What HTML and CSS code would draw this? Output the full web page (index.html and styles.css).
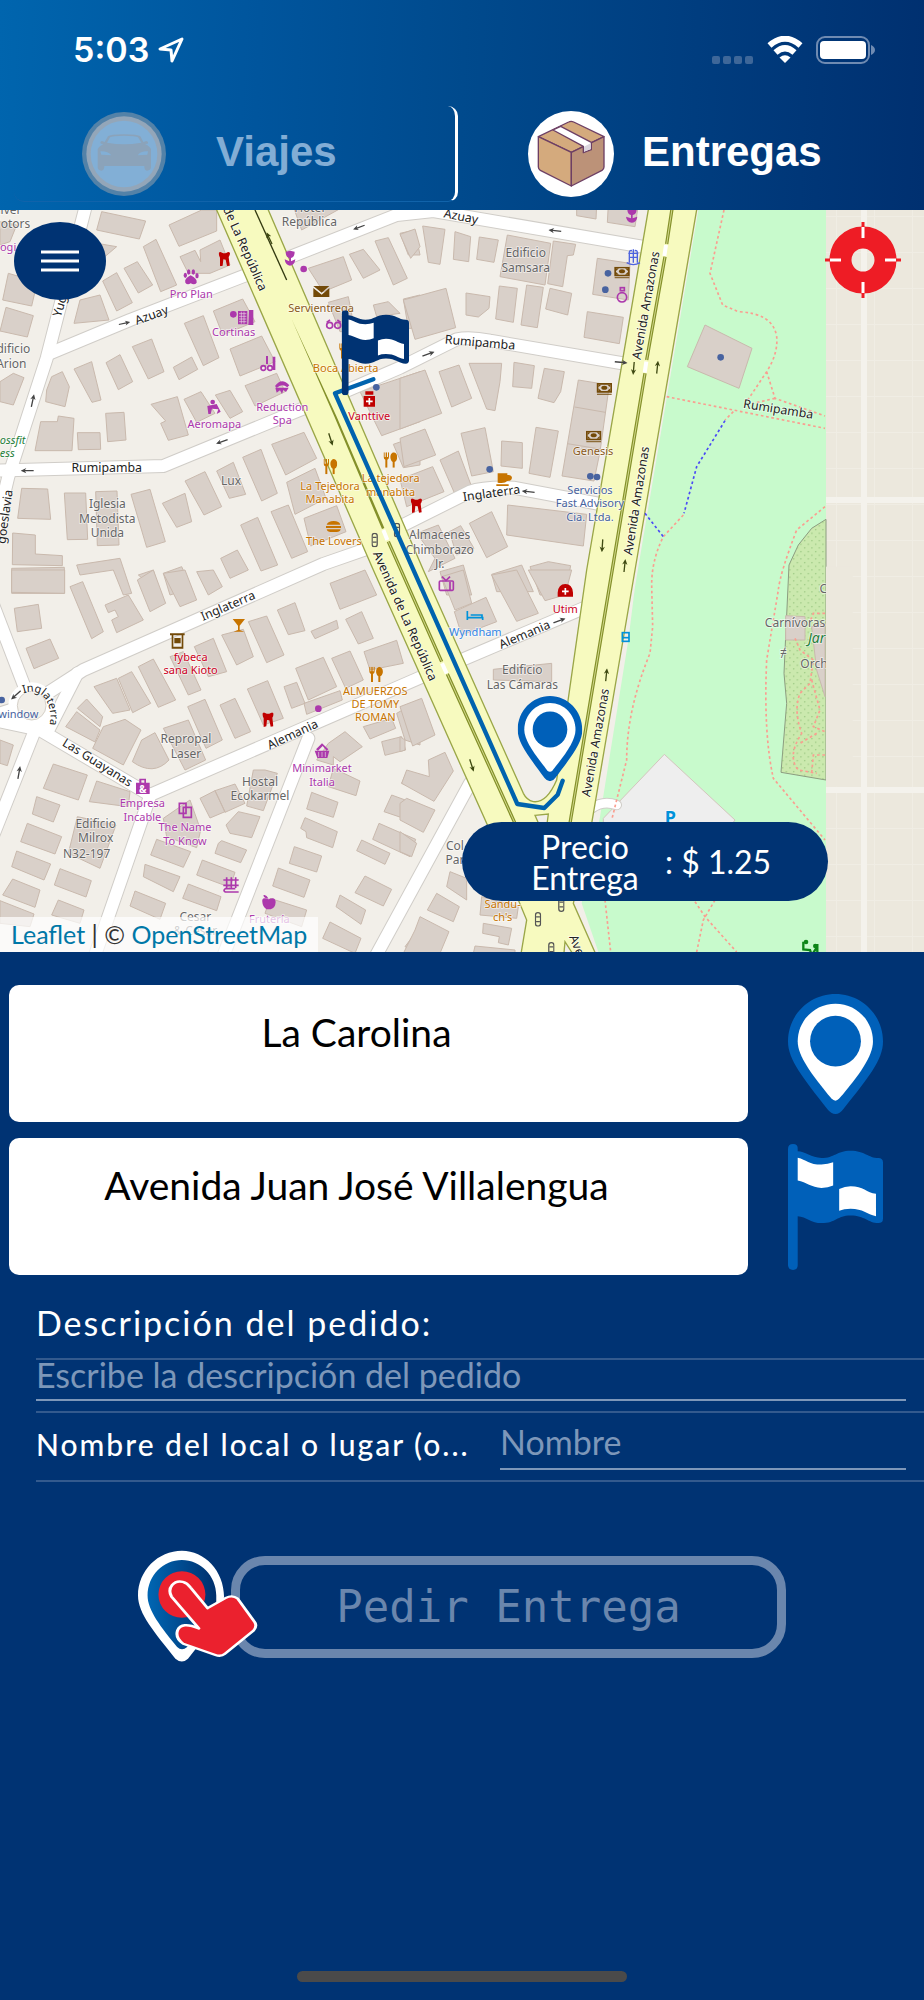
FILE: index.html
```html
<!DOCTYPE html>
<html lang="es">
<head>
<meta charset="utf-8">
<meta name="viewport" content="width=device-width, initial-scale=1">
<title>Entregas</title>
<link rel="stylesheet" href="styles.css">
</head>
<body>
<svg class="defs" aria-hidden="true">
  <symbol id="flag" viewBox="55 518 284 379" preserveAspectRatio="none">
    <path fill="currentColor" d="M55 533Q55 518 70 518T84 533V540C105 540 125 560 155 560C195 560 200 538 242 538C285 538 295 560 325 560Q339 560 339 574V742Q339 756 325 756C295 756 285 733 242 733C200 733 200 756 155 756C125 756 110 737 84 735V883Q84 897 70 897T55 883Z"/>
    <path fill="#fff" d="M84 559C110 565 118 580 155 580Q175 579 190 573V643Q175 650 155 650C125 650 110 632 84 628ZM208 653Q225 645 242 645C280 645 290 664 318 668V735C290 730 280 713 242 713Q222 713 208 719Z"/>
  </symbol>
  <symbol id="pin" viewBox="55 65 284 359" preserveAspectRatio="none">
    <path fill="currentColor" d="M197 65C119 65 55 128 55 207C55 262 100 315 173 410Q184 424 197 424T220 410C295 315 339 262 339 207C339 128 275 65 197 65Z"/>
    <path fill="#fff" d="M197 94C135 94 84 144 84 207C84 250 125 305 185 378Q197 390 208 378C270 305 309 250 309 207C309 144 259 94 197 94Z"/>
    <circle cx="197" cy="206" r="76" fill="currentColor"/>
  </symbol>
  <symbol id="arrow" viewBox="0 0 40 20"><path d="M1 8H27L23 2L40 10L23 18L27 12H1Z" fill="currentColor"/></symbol>
  <symbol id="tooth" viewBox="0 0 34 44"><path d="M0 4Q4 -2 10 3Q17 6 24 3Q30 -2 34 4Q34 10 30 16L33 42L25 43L21 24L14 23L12 42L4 44L4 18Q0 10 0 4Z" fill="#c00000"/></symbol>
  <symbol id="food" viewBox="0 0 42 46"><path d="M1 0V14Q1 20 6 22V46H12V22Q17 20 17 14V0H14V14H11V0H7V14H4V0ZM31 0C22 2 20 12 22 20Q24 27 28 29V46H34V29Q39 27 41 20C43 10 40 2 31 0Z" fill="#c77400"/></symbol>
  <symbol id="bank" viewBox="0 0 46 36"><path fill="#734a08" fill-rule="evenodd" d="M0 0H46V29H0ZM5 5V24H41V5ZM1 32H45V35H1Z"/><path fill="#734a08" d="M5 5H14L5 13ZM41 5H32L41 13ZM5 24H14L5 16ZM41 24H32L41 16Z"/><ellipse cx="23" cy="14" rx="9" ry="6" fill="#734a08"/></symbol>
  <symbol id="lights" viewBox="0 0 20 46"><rect x="2" y="2" width="16" height="42" rx="8" fill="none" stroke="#555" stroke-width="4"/><path d="M4 15H16M4 30H16" stroke="#555" stroke-width="4"/></symbol>
</svg>

<header class="top">
  <div class="status">
    <div class="clock">
      <span>5:03</span>
      <svg width="26" height="26" viewBox="0 0 26 26" aria-hidden="true"><path d="M2 12L24 2L14 24L13 13Z" fill="none" stroke="#fff" stroke-width="3" stroke-linejoin="round"/></svg>
    </div>
    <div class="signals" aria-hidden="true">
      <svg class="dots" width="42" height="8" viewBox="0 0 42 8"><g fill="#3e6799"><rect width="8" height="8" rx="2"/><rect x="11" width="8" height="8" rx="2"/><rect x="22" width="8" height="8" rx="2"/><rect x="33" width="8" height="8" rx="2"/></g></svg>
      <svg width="36" height="28" viewBox="0 0 36 28"><g fill="none" stroke="#fff" stroke-width="6"><path d="M2.500 9.500Q18 -4 33.500 9.500"/><path d="M8.500 16.500Q18 8 27.500 16.500"/></g><path d="M12.500 21.500Q18 17 23.500 21.500L18 27Z" fill="#fff"/></svg>
      <svg width="60" height="28" viewBox="0 0 60 28"><rect x="1" y="1" width="52" height="26" rx="8" fill="none" stroke="#6f8bb2" stroke-width="2"/><rect x="4" y="5" width="46" height="18" rx="4" fill="#fff"/><path d="M55 9Q59 11 59 14T55 19Z" fill="#6f8bb2"/></svg>
    </div>
  </div>
  <nav class="tabs">
    <button class="tab tab-rides" type="button">
      <svg width="84" height="84" viewBox="0 0 252 252" aria-hidden="true">
        <circle cx="126" cy="126" r="126" fill="#5382a8"/><circle cx="126" cy="126" r="113" fill="#93a6b9"/><circle cx="126" cy="126" r="100" fill="#82afd6"/>
        <path fill="#8ba3ba" d="M47 112Q50 104 64 96L57 95Q52 89 60 87L68 90L78 73Q84 67 126 67T175 73L184 90L193 87Q201 89 197 95L189 96Q205 104 207 112V166Q206 176 195 176Q187 176 187 162H67Q67 176 58 176Q48 176 47 166Z"/>
        <path d="M75 92L84 76Q90 71 126 71T168 76L178 92Q150 97 126 97T75 92ZM55 118Q78 117 88 130L58 128ZM198 118Q175 117 167 130L196 128Z" fill="#82afd6"/>
      </svg>
      <span>Viajes</span>
    </button>
    <button class="tab tab-orders" type="button">
      <svg width="86" height="86" viewBox="0 0 258 258" aria-hidden="true">
        <circle cx="129" cy="129" r="129" fill="#fff"/>
        <g stroke="#6d3f64" stroke-width="4" stroke-linejoin="round">
          <path d="M31 77L122 33Q129 29 137 33L228 77L130 124Z" fill="#d4aa7d"/>
          <path d="M31 77L130 124V225L37 178Q31 174 31 168Z" fill="#d4aa7d"/>
          <path d="M228 77L130 124V225L222 178Q228 174 228 168Z" fill="#bc9278"/>
          <path d="M75 57L98 46L190 94V116L166 125V106Z" fill="#fff"/>
        </g>
        <path d="M168 107L188 97V114L168 122Z" fill="#dcd6df"/>
      </svg>
      <span>Entregas</span>
    </button>
  </nav>
</header>

<main>
<section class="map" aria-label="Mapa">
<svg class="tiles" viewBox="0 630 2772 2226" role="img" aria-label="Mapa de calles">
  <defs>
    <pattern id="grass" width="22" height="22" patternUnits="userSpaceOnUse"><circle cx="5" cy="5" r="2" fill="#8fbf78"/><circle cx="16" cy="16" r="2" fill="#8fbf78"/></pattern>
    <pattern id="grid" width="114" height="108" patternUnits="userSpaceOnUse"><path d="M0 0H114M0 0V108" stroke="#f0ede4" stroke-width="6"/></pattern>
    <path id="ring" d="M70 2080Q130 2060 148 2125Q160 2175 130 2210"/>
    <g id="streets">
      <path d="M262 600L140 1075L25 1430L-40 1700"/><path d="M145 1062L390 960L760 817"/><path d="M860 775L1190 645L1300 633L1940 742"/>
      <path d="M-20 1412L490 1398L930 1217"/><path d="M1010 1185L1200 1103L1370 1018Q1410 1010 1470 1022L1880 1092"/>
      <path d="M-30 2150L95 2110L250 2010L970 1692L1120 1640"/><path d="M1200 1580L1410 1475Q1450 1460 1540 1463L1815 1515"/>
      <path d="M-30 1790L85 2090"/><path d="M-20 2160L120 2190L450 2385L1290 2020"/><path d="M1385 1980L1750 1825"/>
      <path d="M925 2215L665 2880"/><path d="M448 2395L280 2880"/><path d="M105 2190L-30 2530"/><path d="M232 2020L145 2190"/>
      <path d="M1410 2350L1110 2900"/>
    </g>
  </defs>
  <rect y="600" width="2772" height="2300" fill="#f2efe9"/>
  <rect x="2478" y="600" width="300" height="2300" fill="#ece8dd"/>
  <rect x="2478" y="600" width="300" height="2300" fill="url(#grid)"/>
  <path d="M2592 630V2870M2478 1500H2772M2478 2370H2772" stroke="#f4f2ec" stroke-width="18"/>

  <!-- park -->
  <path d="M2095 630H2478V2870H1800L1745 2710L1800 2450L1885 1920L1905 1760Z" fill="#c8facc"/>
  <path d="M2478 1558L2435 1585L2395 1635L2367 1695L2357 1910L2352 2020L2360 2110L2343 2317L2478 2340Z" fill="#cbe9ae" stroke="#8c9c80" stroke-width="3"/>
  <path d="M2478 1558L2435 1585L2395 1635L2367 1695L2357 1910L2352 2020L2360 2110L2343 2317L2478 2340Z" fill="url(#grass)"/>
  <path d="M1993 2263L2205 2460L2160 2520H1810V2455Z" fill="#eee" stroke="#d3c5bd" stroke-width="3"/>
  <path d="M1775 2425Q1810 2400 1850 2415" fill="none" stroke="#d0cdc8" stroke-width="32" stroke-linecap="round"/>
  <path d="M1775 2425Q1810 2400 1850 2415" fill="none" stroke="#fff" stroke-width="26" stroke-linecap="round"/>

  <!-- buildings -->
  <g class="buildings" transform="translate(0 615)">
    <path d="M305 20L437 48L418 102L290 75ZM507 60L605 15H650V78L537 124ZM540 155L585 136L602 170L600 135L660 105L690 180L630 205L565 205ZM430 125L468 103L530 240L482 260ZM372 190L412 170L458 240L415 264ZM308 228L350 203L397 293L350 318ZM262 110L350 125L250 210ZM240 285L300 270L327 345L222 355ZM25 205L112 230L95 303L8 285ZM18 307L100 332L82 396L0 378ZM640 318L728 282L765 350L668 390ZM553 355L610 332L657 458L610 482ZM397 425L455 402L492 500L445 522ZM690 432L785 393L825 470L720 513ZM520 487L575 456L593 493L537 524ZM318 473L360 449L398 530L355 554ZM222 492L275 470L303 585L276 592ZM140 555L155 515L187 500L208 545L195 605L137 590ZM735 542L830 505L855 560L765 603ZM453 598L532 575L565 690L505 706L482 655L497 648ZM552 583L603 560L645 625L590 652ZM646 570L690 556L728 620L690 640ZM122 650H172L175 633L222 640L216 737H105ZM317 625L372 622L378 705L323 710ZM232 683H300L302 733L235 734ZM815 718L912 682L950 760L857 810ZM728 757L783 733L832 865L785 888ZM860 832L945 790L978 880L885 928ZM650 798L700 772L737 868L688 880ZM555 828L615 800L665 905L612 930ZM65 850L143 852L152 943L53 940ZM193 864H257L263 1003L202 1004ZM287 860L351 858L357 1020L292 1022ZM393 868L450 853L496 1010L440 1027ZM487 895L555 865L575 950L530 967ZM38 984L106 990V1047L187 1052V1082L37 1079ZM813 920L865 900L923 1040L875 1060ZM722 960L773 937L833 1080L783 1098ZM912 940L1010 902L1038 980L932 1023ZM662 1060L712 1035L745 1095L690 1120ZM35 1090L193 1087V1165H35ZM0 530L40 505L72 518L40 600L0 590ZM878 0L1040 0L905 75ZM925 190L1030 155L1055 225L970 260ZM1048 148L1090 133L1140 195L1090 220ZM1125 108L1165 98L1222 220L1180 240ZM1200 85L1245 75L1260 150L1225 150ZM985 292L1045 275L1065 380H1020ZM1120 300L1165 290L1200 325L1130 335ZM1210 282L1260 270V370H1225ZM1080 560L1260 500V650L1145 692ZM1180 718L1260 690V780L1210 788ZM230 1080L360 1060L395 1165L370 1170L340 1095L240 1110ZM415 1110L460 1095L480 1165ZM490 1105L545 1085L575 1150L510 1170ZM0 50L50 60L30 110L0 120Z"/>
  </g>
  <g class="buildings" transform="translate(1200 615)">
    <path d="M0 88L45 72L60 125L32 160ZM68 63L135 73L120 178L85 172ZM165 80L212 95L206 170L160 163ZM238 96L295 105L282 172L230 163ZM322 90L452 115L435 240L300 215ZM460 108L527 118L520 150L502 152L488 245L443 236ZM10 285L138 250L167 368L45 403ZM198 264L270 275L267 310L235 336L198 330ZM298 243L352 250L340 352L287 342ZM380 240L430 247L412 368L363 360ZM450 250L515 265L503 330L437 312ZM592 160L690 175L685 285L578 268ZM562 320L670 337L658 416L552 397ZM535 525L628 540L600 740L582 828L486 813ZM0 520L75 495L125 625L0 672ZM117 500L177 480L215 580L155 606ZM207 475H305L300 530L285 617L260 612ZM342 472L403 482L395 550L338 545ZM433 490L493 500L482 560L462 593L414 580ZM0 700L75 672L107 750L12 785ZM183 685L255 668L280 800L215 813ZM305 708L367 713V790L303 783ZM408 667L475 678L450 817L387 805ZM120 765L175 738L213 840L165 868ZM0 823L98 785L132 860L20 905ZM323 900L560 928L550 1023L320 990ZM208 955L275 920L323 1025L260 1058ZM148 980L182 962L222 1030L170 1050ZM50 985L115 960L165 1060L85 1100L105 1060ZM275 1108L365 1080L400 1160H290ZM390 1085L445 1070L512 1082L495 1170H420ZM120 1100L190 1080L215 1170H140ZM625 0H715L705 65L622 52ZM530 0H590L588 42L530 32ZM915 360L1056 430L1017 550L862 485Z"/>
    <path d="M524 606L616 622M502 716L600 732" fill="none"/>
  </g>
  <g class="buildings" transform="translate(0 1710)">
    <path d="M35 0H194V70L35 67ZM210 50L248 35L310 185L275 206ZM315 105L385 75L430 150L350 188L335 150L355 140L345 120L325 128ZM412 30L460 0L497 100L450 125ZM490 10L555 0L590 90L540 110ZM590 5L640 0L667 50L625 75ZM43 115L115 103L125 175L52 185ZM78 235L150 207L176 265L102 296ZM990 40L1095 0L1130 75L1020 118ZM832 120L885 98L915 182L865 194ZM933 184L1010 151L1015 175L945 206ZM1037 148L1085 125L1120 205L1075 222ZM745 155L800 138L852 255L800 278ZM665 195L730 178L760 260L710 285ZM583 230L640 205L680 305L625 320ZM510 260L550 245L603 360L565 375ZM415 290L460 267L527 390L475 412ZM282 350L350 325L390 420L338 430ZM355 325L395 305L452 400L398 428ZM887 295L970 262L1010 350L925 390ZM995 265L1050 243L1090 330L1037 355ZM1092 245L1190 211L1210 280L1110 300ZM852 350L890 337L915 400L875 415ZM742 357L803 332L850 445L790 465ZM912 400L1020 362L1027 390L920 433ZM660 405L705 385L752 485L705 505ZM563 410L615 388L667 510L618 535ZM232 415L260 387L308 440L300 470ZM197 470L230 425L300 480L285 516ZM310 470L375 448L423 480L370 585L278 535ZM397 575L425 510L465 488L507 570Q460 620 397 575ZM490 475L565 450L617 570L555 600ZM1090 470L1175 445L1187 475L1110 507ZM1145 515L1205 500L1217 540L1155 556ZM985 520L1035 485L1087 530L1020 575L1000 560V585L950 570ZM160 582L262 615L235 690L130 655ZM290 633L390 665L385 710L268 695ZM110 680L180 705L160 756L97 732ZM600 685L645 662L675 725L630 744ZM645 662L705 642L735 700L675 727ZM760 600H795L832 610L790 722L740 708ZM1000 595L1080 633L1068 677L985 650ZM935 667L1014 697L1000 742L920 717ZM490 745L570 690L602 780L590 833L500 800ZM678 765L715 725L780 740L755 803L690 790ZM82 760L185 800L165 852L62 815ZM232 740L348 765L300 895L205 850ZM470 808L572 845L550 892L452 855ZM655 820L665 812L740 840L722 878L645 850ZM915 743L1012 785L998 833L920 803L918 785L902 775ZM883 830L965 858L950 906L868 880ZM1220 605L1270 630V660L1205 640ZM1175 675L1270 710V765L1152 725ZM1137 760L1247 808L1230 860L1118 808ZM1085 810L1170 850L1155 883L1070 842ZM50 843L152 882L132 930L35 890ZM435 883L540 920L520 965L430 920ZM607 870L705 907L690 952L590 915ZM180 896L274 932L258 981L163 945ZM835 894L930 930L912 982L818 948ZM565 942L663 980L650 1022L548 985ZM38 927L120 960L105 1012L8 975ZM405 963L497 1000L480 1048L390 1008ZM1095 918L1175 958L1150 1008L1065 968ZM175 990L252 1020L240 1060L155 1035ZM1020 975L1097 1020L1083 1063L1008 1010ZM810 985L920 1020L905 1070L795 1030ZM0 992L102 1032L90 1070L0 1060ZM990 1056L1083 1105L1065 1150L968 1105ZM0 510L40 525L22 587L0 580ZM1190 430L1260 390V525L1215 510ZM1215 1130L1260 1070V1150Z"/>
  </g>
  <g class="buildings" transform="translate(1200 1710)">
    <path d="M275 15L350 0L415 130L350 154ZM385 0H515L495 75L435 92ZM125 20L190 0L215 100L165 120ZM163 125L258 82L290 155L185 195ZM280 298L455 280V335L280 330ZM0 410L65 385L105 495L38 528ZM0 500L15 510V540L0 545ZM20 600L88 620L85 570L135 547L160 603L102 694L5 640ZM20 685L105 720L70 787L0 750V700ZM0 785L50 820L35 860L0 845ZM110 970L178 1010L160 1055L82 1020ZM150 905L200 925V990L140 950ZM245 980L355 1010L350 1045L240 1035ZM250 1060L335 1075L325 1125L295 1118L298 1100L248 1090ZM60 1040L147 1085L120 1150H10L45 1080ZM225 1128L345 1140V1150H220ZM1157 137L1215 140V210H1157ZM1235 170L1275 160V380L1250 300Z"/>
  </g>

  <!-- streets: casing, then surface -->
  <use href="#streets" class="street-edge"/>
  <use href="#streets" class="street"/>
  <circle cx="95" cy="2117" r="56" fill="none" stroke="#fff" stroke-width="28"/>
  <circle cx="95" cy="2117" r="43" fill="#f2efe9" stroke="#d5d0c8" stroke-width="3"/>

  <!-- avenues -->
  <path d="M637 600L1120 1710L1460 2470L1580 2760L1560 2880H1795L1720 2710L1775 2470L1905 1710L2095 600H1950L1760 1710L1670 2340Q1640 2410 1600 2405Q1580 2400 1570 2380L1270 1710L792 600Z" fill="#f7fabf" stroke="#9aa647" stroke-width="4"/>
  <path class="median" d="M1165 1625L1325 1985M1342 2022L1545 2470M2017 620L2000 732M1995 770L1940 1080M1935 1120L1710 2470"/>
  <path class="median-core" d="M1165 1625L1325 1985M1342 2022L1545 2470M2017 620L2000 732M1995 770L1940 1080M1935 1120L1710 2470"/>
  <path d="M875 958L1010 1250L1153 1584L1146 1587L1004 1252Z" fill="#84902a"/>
  <path d="M765 630L860 840" stroke="#333a10" stroke-width="4"/>
  <path d="M1998 735L1993 768M1939 1085L1934 1118M1150 1590L1162 1620M1326 1990L1340 2020" stroke="#fff" stroke-width="12"/>
  <path d="M1605 2446L1645 2442L1640 2480H1620ZM1690 2880L1695 2825L1730 2880Z" fill="#f2efe9" stroke="#9aa647" stroke-width="4"/>

  <!-- footways -->
  <g class="foot">
    <path d="M2172 630L2130 820L2168 915L2215 935Q2320 940 2330 1010Q2335 1060 2300 1115L2240 1205M2000 1190L2475 1285M2300 1115L2325 1195L2475 1248M2325 1195L2260 1210M2200 1235L2175 1260M2050 1545L1990 1610Q1955 1680 1955 1755L1958 1880L1950 1960Q1880 2130 1880 2280L1835 2460M2475 1520L2390 1590Q2340 1720 2335 1770L2300 1980Q2290 2200 2320 2335L2475 2520M1815 2700L1832 2856M2085 2705L2115 2750L2210 2856M2145 2700L2110 2760L2090 2856"/>
    <path d="M2475 1840H2440L2432 1860M2385 1915L2400 1950L2440 1980L2430 2050L2400 2080Q2380 2130 2405 2200Q2360 2270 2395 2310L2450 2320M2435 2040L2460 2130L2440 2180L2475 2195M2450 2200L2400 2230M2475 2265H2440L2435 2320"/>
  </g>
  <path class="bike" d="M2175 1262L2090 1400L2052 1540M1935 1540L1990 1610"/>

  <!-- direction arrows -->
  <g color="#444">
    <use href="#arrow" x="355" y="960" width="36" height="20" transform="rotate(-12 373 970)"/>
    <use href="#arrow" x="1058" y="672" width="38" height="20" transform="rotate(160 1077 682)"/>
    <use href="#arrow" x="1645" y="682" width="40" height="20" transform="rotate(186 1665 692)"/>
    <use href="#arrow" x="78" y="1192" width="40" height="20" transform="rotate(-78 98 1202)"/>
    <use href="#arrow" x="62" y="1402" width="40" height="20" transform="rotate(180 82 1412)"/>
    <use href="#arrow" x="647" y="1315" width="38" height="20" transform="rotate(160 666 1325)"/>
    <use href="#arrow" x="1265" y="1052" width="40" height="20" transform="rotate(-20 1285 1062)"/>
    <use href="#arrow" x="1843" y="1077" width="40" height="20" transform="rotate(5 1863 1087)"/>
    <use href="#arrow" x="1565" y="1465" width="40" height="20" transform="rotate(186 1585 1475)"/>
    <use href="#arrow" x="37" y="2308" width="40" height="20" transform="rotate(-80 57 2318)"/>
    <use href="#arrow" x="28" y="2075" width="40" height="20" transform="rotate(138 48 2085)"/>
    <use href="#arrow" x="1658" y="1852" width="40" height="20" transform="rotate(-20 1678 1862)"/>
  </g>
  <g color="#3f4a12">
    <use href="#arrow" x="972" y="1308" width="40" height="20" transform="rotate(72 992 1318)"/>
    <use href="#arrow" x="788" y="705" width="40" height="20" transform="rotate(245 808 715)"/>
    <use href="#arrow" x="1881" y="1095" width="40" height="20" transform="rotate(95 1901 1105)"/>
    <use href="#arrow" x="1952" y="1092" width="40" height="20" transform="rotate(-84 1972 1102)"/>
    <use href="#arrow" x="1787" y="1627" width="40" height="20" transform="rotate(94 1807 1637)"/>
    <use href="#arrow" x="1854" y="1687" width="40" height="20" transform="rotate(-84 1874 1697)"/>
    <use href="#arrow" x="1799" y="2015" width="40" height="20" transform="rotate(-84 1819 2025)"/>
    <use href="#arrow" x="1395" y="2286" width="40" height="20" transform="rotate(72 1415 2296)"/>
  </g>

  <!-- place symbols -->
  <use href="#tooth" x="656" y="755" width="34" height="44"/><use href="#tooth" x="1232" y="1495" width="34" height="44"/><use href="#tooth" x="787" y="2137" width="34" height="44"/>
  <use href="#food" x="970" y="1377" width="42" height="46"/><use href="#food" x="1150" y="1357" width="42" height="46"/><use href="#food" x="1107" y="2000" width="42" height="46"/><use href="#food" x="1017" y="1030" width="42" height="46"/>
  <use href="#bank" x="1842" y="800" width="48" height="36"/><use href="#bank" x="1789" y="1149" width="48" height="36"/><use href="#bank" x="1757" y="1292" width="48" height="36"/>
  <use href="#lights" x="1114" y="1598" width="20" height="44"/><use href="#lights" x="1181" y="1568" width="20" height="44"/><use href="#lights" x="1604" y="2736" width="20" height="44"/><use href="#lights" x="1674" y="2692" width="20" height="44"/><use href="#lights" x="1644" y="2826" width="20" height="44"/>
  <path fill="#734a08" d="M940 858L965 878L988 858ZM940 864V891H988V864L965 884ZM510 1900H554V1906H510ZM515 1906H520V1940H545V1906H550V1946H515ZM523 1914H542V1930H523Z"/>
  <g fill="#4863a0"><circle cx="1129" cy="1162" r="10"/><circle cx="1824" cy="820" r="10"/><circle cx="1816" cy="869" r="10"/><circle cx="2162" cy="1072" r="10"/><circle cx="1469" cy="1408" r="10"/><circle cx="1771" cy="1429" r="10"/><circle cx="1791" cy="1431" r="10"/><circle cx="5" cy="2100" r="10"/></g>
  <g fill="#ac39ac">
    <circle cx="911" cy="807" r="10"/><circle cx="955" cy="2126" r="10"/><circle cx="700" cy="943" r="10"/>
    <path d="M572 826Q552 836 556 848Q562 856 572 850Q584 856 590 848Q592 836 572 826Z"/><ellipse cx="556" cy="826" rx="5" ry="8"/><ellipse cx="566" cy="816" rx="5" ry="8"/><ellipse cx="580" cy="816" rx="5" ry="8"/><ellipse cx="591" cy="827" rx="5" ry="8"/>
    <path d="M857 755L870 752L884 755Q884 772 873 774V784L886 778Q884 796 870 797Q856 796 854 778L868 784V774Q857 772 857 755ZM1882 627H1910Q1910 643 1898 645V655L1912 650Q1910 666 1896 668Q1880 666 1878 650L1893 655V645Q1882 643 1882 627Z"/>
    <path d="M714 933H742V973H714ZM747 930H760V975H745Z"/><path d="M818 1070H826V1110H818ZM798 1068H804V1092H798Z"/>
    <path d="M825 1158Q845 1130 868 1156L862 1162Q845 1148 830 1164Z"/><path d="M826 1163H866L858 1176L850 1170L846 1182L840 1171L830 1178Z"/>
    <circle cx="638" cy="1206" r="7"/><path d="M622 1218L650 1212L662 1235L650 1242L655 1228L636 1226L632 1242H625Z"/>
    <path d="M408 2348H418V2336H438V2348H449V2382H408ZM424 2348H433V2341H424Z" fill-rule="evenodd"/>
    <path d="M944 2252H988L982 2274H952ZM954 2252L968 2238L980 2252L985 2248L966 2230L948 2248Z"/>
    <path d="M787 2706Q785 2692 797 2695L806 2698Q826 2688 827 2706Q826 2724 812 2728H800Q788 2722 787 2706ZM806 2696Q798 2682 790 2686Q792 2696 806 2696Z"/>
  </g>
  <path d="M717 941H739M717 949H739M717 957H739M717 965H739M724 935V971M732 935V971M956 2256V2271M966 2256V2271M976 2256V2271" stroke="#e6d6e2" stroke-width="2"/>
  <g fill="none" stroke="#ac39ac" stroke-width="5">
    <circle cx="989" cy="976" r="9"/><circle cx="1013" cy="976" r="9"/><path d="M980 967L990 960M1022 967L1012 960"/>
    <circle cx="790" cy="1104" r="7"/><circle cx="810" cy="1104" r="7"/><circle cx="1866" cy="892" r="14"/><rect x="1861" y="863" width="12" height="9"/>
    <rect x="1318" y="1743" width="42" height="28" rx="3"/><path d="M1326 1730L1338 1742L1350 1730M1350 1745V1770"/>
    <path d="M538 2410H558V2440H538ZM550 2422H574V2452H550Z"/><path d="M670 2640H716M670 2656H716M680 2632V2664M694 2632V2664M707 2632V2664M716 2676H676Q668 2672 676 2666H706"/>
  </g>
  <text x="428" y="2378" class="glyph">&amp;</text>
  <g fill="#c00000"><path d="M1096 1174H1120V1184H1096ZM1091 1188H1125V1220H1091ZM1673 1790V1778Q1675 1752 1696 1752T1719 1778V1790Z"/></g>
  <path d="M1108 1194V1214M1098 1204H1118M1696 1764V1784M1686 1774H1706" stroke="#fff" stroke-width="5"/>
  <path fill="#c77400" d="M980 1574Q984 1563 1001 1563T1021 1574ZM978 1578H1023V1584H978ZM980 1588H1022Q1020 1596 1010 1596H992Q982 1596 980 1588ZM698 1857H735L719 1877V1890L733 1895H701L714 1890V1877ZM1493 1420H1522V1425Q1534 1423 1536 1433Q1534 1444 1521 1443Q1516 1451 1493 1448ZM1489 1453H1526V1458H1489Z"/>
  <g fill="none" stroke="#0092da" stroke-width="5"><path d="M1402 1833V1860M1402 1853H1448V1860M1412 1845H1446V1853"/><rect x="1867" y="1898" width="20" height="26"/><path d="M1867 1913H1887"/></g>
  <g fill="none" stroke="#4d63df" stroke-width="4"><path d="M1885 760H1915M1888 772H1912M1900 748V788M1888 788V758Q1888 750 1896 752M1912 788V758Q1912 750 1904 752M1880 788Q1900 800 1920 788"/></g>
  <path d="M2410 2825V2848L2430 2850L2434 2862M2452 2840L2440 2858M2452 2832V2856" stroke="#0d8517" stroke-width="7" fill="none"/><circle cx="2418" cy="2826" r="7" fill="#0d8517"/><circle cx="2446" cy="2838" r="7" fill="#0d8517"/>

  <!-- labels -->
  <g class="road">
    <text x="455" y="958" transform="rotate(-20 455 946)">Azuay</text>
    <text x="1383" y="662" transform="rotate(11 1383 650)">Azuay</text>
    <text x="320" y="1417">Rumipamba</text>
    <text x="1440" y="1040" transform="rotate(5 1440 1028)">Rumipamba</text>
    <text x="2335" y="1240" transform="rotate(9 2335 1228)">Rumipamba</text>
    <text x="1475" y="1492" transform="rotate(-8 1475 1484)">Inglaterra</text>
    <text x="684" y="1830" transform="rotate(-23 684 1818)">Inglaterra</text>
    <text x="878" y="2216" transform="rotate(-25 878 2204)">Alemania</text>
    <text x="1574" y="1916" transform="rotate(-23 1574 1904)">Alemania</text>
    <text x="292" y="2300" transform="rotate(32 292 2288)">Las Guayanas</text>
    <text x="180" y="930" transform="rotate(-74 180 918)">Yug</text>
    <text x="15" y="1562" transform="rotate(-82 15 1550)">goeslavia</text>
    <text x="735" y="758" transform="rotate(66 735 746)">de La República</text>
    <text x="1215" y="1860" transform="rotate(66 1215 1848)">Avenida de La República</text>
    <text x="1938" y="928" transform="rotate(-80 1938 916)">Avenida Amazonas</text>
    <text x="1910" y="1514" transform="rotate(-81 1910 1502)">Avenida Amazonas</text>
    <text x="1787" y="2240" transform="rotate(-80 1787 2228)">Avenida Amazonas</text>
    <text x="1730" y="2848" transform="rotate(68 1730 2836)">Ave</text>
    <text class="ring"><textPath href="#ring">Inglaterra</textPath></text>
  </g>
  <g class="place">
    <text x="22" y="643">niver</text><text x="30" y="685">Motors</text>
    <text x="928" y="635">Hotel</text><text x="928" y="677">República</text>
    <text x="40" y="1060">dificio</text><text x="34" y="1104">Arion</text>
    <text x="693" y="1454">Lux</text>
    <text x="322" y="1524">Iglesia</text><text x="322" y="1568">Metodista</text><text x="322" y="1612">Unida</text>
    <text x="1577" y="770">Edificio</text><text x="1577" y="815">Samsara</text>
    <text x="1319" y="1617">Almacenes</text><text x="1319" y="1661">Chimborazo</text><text x="1319" y="1705">Jr.</text>
    <text x="1567" y="2023">Edificio</text><text x="1567" y="2066">Las Cámaras</text>
    <text x="558" y="2229">Repropal</text><text x="558" y="2273">Laser</text>
    <text x="780" y="2357">Hostal</text><text x="780" y="2400">Ecokarmel</text>
    <text x="287" y="2483">Edificio</text><text x="287" y="2527">Milrox</text><text x="260" y="2573">N32-197</text>
    <text x="586" y="2762">Cesar</text><text x="586" y="2804">&amp; Cesar</text>
    <text x="1365" y="2550">Col</text><text x="1365" y="2593">Par</text>
    <text x="2470" y="1780">C</text><text x="2385" y="1881">Carnívoras</text><text x="2442" y="2003">Orch</text><text x="2350" y="1972">≠</text>
  </g>
  <g class="shop">
    <text x="20" y="754">logi</text><text x="574" y="895">Pro Plan</text><text x="701" y="1009">Cortinas</text><text x="643" y="1284">Aeromapa</text>
    <text x="847" y="1232">Reduction</text><text x="847" y="1272">Spa</text>
    <text x="966" y="2316">Minimarket</text><text x="966" y="2357">Italia</text>
    <text x="427" y="2422">Empresa</text><text x="427" y="2462">Incable</text>
    <text x="555" y="2494">The Name</text><text x="555" y="2535">To Know</text><text x="808" y="2770">Frutería</text>
  </g>
  <g class="eat">
    <text x="1037" y="1117">Boca Abierta</text><text x="990" y="1469">La Tejedora</text><text x="990" y="1510">Manabita</text>
    <text x="1172" y="1447">La tejedora</text><text x="1172" y="1487">manabita</text><text x="1002" y="1636">The Lovers</text>
    <text x="1126" y="2084">ALMUERZOS</text><text x="1126" y="2124">DE TOMY</text><text x="1126" y="2164">ROMAN</text>
    <text x="1508" y="2723">Sandu-</text><text x="1508" y="2763">ch's</text>
  </g>
  <g class="post"><text x="963" y="937">Servientrega</text><text x="1779" y="1365">Genesis</text></g>
  <g class="health"><text x="1108" y="1259">Vanttive</text><text x="572" y="1982">fybeca</text><text x="572" y="2022">sana Kioto</text><text x="1696" y="1838">Utim</text></g>
  <g class="office"><text x="1770" y="1481">Servicios</text><text x="1770" y="1521">Fast Advisory</text><text x="1770" y="1562">Cia. Ltda.</text><text x="55" y="2154">window</text></g>
  <g class="hotel"><text x="1426" y="1908">Wyndham</text></g>
  <g class="green"><text x="38" y="1331">ossfit</text><text x="22" y="1370">ess</text><text x="2450" y="1930" class="big">Jar</text></g>
  <text x="2011" y="2472" class="parking">P</text>
  <rect x="2478" y="1700" width="80" height="660" fill="#ece8dd"/>

  <!-- route and markers -->
  <path d="M1120 1138L1005 1180L1552 2412L1633 2424L1673 2384L1688 2342" fill="none" stroke="#0063ae" stroke-width="13" stroke-linejoin="round" stroke-linecap="round"/>
  <use href="#flag" x="1025" y="931" width="202" height="255" color="#003373"/>
  <use href="#pin" x="1553" y="2088" width="194" height="256" color="#0060b9"/>
</svg>

<button class="menu" type="button" aria-label="Menú"><svg width="38" height="24" viewBox="0 0 38 24" aria-hidden="true"><path d="M0 3H38M0 12H38M0 21H38" stroke="#fff" stroke-width="3"/></svg></button>
<button class="locate" type="button" aria-label="Mi ubicación"><svg width="78" height="76" viewBox="-39 -38 78 76" aria-hidden="true"><circle r="22.500" fill="none" stroke="#ee1c25" stroke-width="22"/><path d="M0 -38V38M-38 0H38" stroke="#ee1c25" stroke-width="3" stroke-dasharray="5 66"/><path d="M0 -33V-22M0 33V22M-33 0H-22M33 0H22" stroke="#fff" stroke-width="3"/></svg></button>
<div class="price"><span class="price-name">Precio Entrega</span><span>: $ 1.25</span></div>
<p class="credit"><a href="#leaflet">Leaflet</a> | © <a href="#osm">OpenStreetMap</a></p>
</section>

<form class="order">
  <div class="stops">
    <textarea class="stop" aria-label="Origen" rows="2">La Carolina</textarea>
    <svg class="stop-icon" width="95" height="120" aria-hidden="true"><use href="#pin" width="95" height="120"/></svg>
    <textarea class="stop" aria-label="Destino" rows="2">Avenida Juan José Villalengua</textarea>
    <svg class="stop-icon" width="95" height="126" aria-hidden="true"><use href="#flag" width="95" height="126"/></svg>
  </div>
  <div class="fields">
    <label class="heading" for="detail">Descripción del pedido:</label>
    <div class="item detail"><input id="detail" type="text" placeholder="Escribe la descripción del pedido"></div>
    <div class="item venue"><label for="venue">Nombre del local o lugar (o...</label><input id="venue" type="text" placeholder="Nombre"></div>
  </div>
  <div class="submit">
    <svg class="hand" width="120" height="113" viewBox="42 58 276 340" preserveAspectRatio="none" aria-hidden="true">
      <defs><linearGradient id="deep"><stop stop-color="#0066b3"/><stop offset="1" stop-color="#002f6c"/></linearGradient></defs>
      <path d="M143 60C88 60 42 120 42 195C42 250 80 305 128 385Q143 402 157 385L175 355L240 200C240 120 195 60 143 60Z" fill="#fff"/>
      <path d="M143 88C100 88 64 135 64 195C64 240 95 290 132 350Q143 364 155 350L222 215V195C222 135 185 88 143 88Z" fill="url(#deep)"/>
      <ellipse cx="143" cy="192" rx="54" ry="70" fill="#eb212e"/>
      <path d="M119 198C108 172 125 148 145 154Q155 157 163 171L202 233L244 202Q259 192 271 204L311 276Q316 288 308 300L242 370Q233 380 220 374L146 340Q127 322 133 300Q142 272 182 294Z" fill="#eb212e" stroke="#fff" stroke-width="7" stroke-linejoin="round"/>
    </svg>
    <button class="send" type="submit" disabled>Pedir Entrega</button>
  </div>
</form>
</main>
<div class="home-bar"></div>
</body>
</html>
```
FILE: styles.css
```css
* { box-sizing: border-box; }
body { margin: 0; min-height: 100vh; display: flex; flex-direction: column; background: #003373; color: #fff; font-family: Lato, "Noto Sans", sans-serif; }
button, input, textarea { font: inherit; color: inherit; margin: 0; border: 0; background: none; }
.defs { position: absolute; width: 0; height: 0; }

.top { padding-bottom: 8px; background: linear-gradient(92deg, #0065ae, #00559d 28%, #004a8d 50%, #003d7f 75%, #003070); }
.status { display: flex; justify-content: space-between; align-items: center; height: 106px; padding: 0 48px 6px 73px; }
.clock { display: flex; align-items: center; gap: 9px; font: 600 34px/40px Inter, sans-serif; }
.signals { display: flex; align-items: center; gap: 13px; }
.dots { margin-top: 20px; }
.tabs { display: grid; grid-template-columns: 1fr 1fr; gap: 8px; padding: 0 14px; }
.tab { display: flex; align-items: center; height: 96px; padding: 0; border-radius: 10px; font: bold 42px/48px "Liberation Sans", sans-serif; text-align: left; }
.tab span { padding-bottom: 4px; }
.tab-rides { gap: 50px; padding-left: 68px; border-right: 3px solid #fff; border-bottom: 1px solid #1163aa; color: #82add5; }
.tab-orders { gap: 28px; padding-left: 62px; }

.map { position: relative; overflow: hidden; }
.tiles { display: block; width: 100%; height: auto; font-family: "Noto Sans", sans-serif; }
.tiles text { text-anchor: middle; font-size: 33px; paint-order: stroke; stroke: rgba(255, 255, 255, .6); stroke-width: 5px; }
.tiles .road text { font-size: 37px; fill: #222; }
.tiles .road .ring { font-size: 33px; text-anchor: start; }
.tiles .place text { font-size: 36px; fill: #666; }
.tiles .shop { fill: #ac39ac; }
.tiles .eat { fill: #c77400; }
.tiles .post { fill: #8a5a1a; }
.tiles .health { fill: #cc0022; }
.tiles .office { fill: #4863a0; }
.tiles .hotel { fill: #3385e6; }
.tiles .green { fill: #267f3a; font-style: italic; }
.tiles .green .big { font-size: 42px; }
.tiles .parking { font-size: 54px; font-weight: bold; fill: #0092da; }
.tiles .glyph { font-size: 30px; font-weight: bold; fill: #fff; stroke: none; }
.buildings { fill: #d9d0c9; stroke: #c9b9ad; stroke-width: 3; }
.street-edge, .street { fill: none; stroke-linejoin: round; stroke-linecap: round; }
.street-edge { stroke: #d0cdc8; stroke-width: 42px; }
.street { stroke: #fff; stroke-width: 36px; }
.median, .median-core { fill: none; }
.median { stroke: #84902a; stroke-width: 10px; }
.median-core { stroke: #d3d98c; stroke-width: 3px; }
.foot, .bike { fill: none; stroke: #fa9e90; stroke-width: 5px; stroke-dasharray: 8 8; }
.bike { stroke: #4a4af5; }

.menu { position: absolute; top: 12px; left: 14px; display: grid; place-items: center; width: 92px; height: 78px; padding: 0; border-radius: 50%; background: #003373; }
.locate { position: absolute; top: 12px; right: 22px; padding: 0; line-height: 0; }
.price { position: absolute; right: 96px; bottom: 51px; display: flex; align-items: center; gap: 20px; width: 366px; height: 79px; padding-left: 63px; border-radius: 40px; background: #003373; font-size: 32px; line-height: 31px; }
.price-name { width: 120px; text-align: center; }
.credit { position: absolute; left: 0; bottom: 0; margin: 0; padding: 0 11px; background: rgba(255, 255, 255, .7); color: #333; font-size: 25px; line-height: 35px; }
.credit a { color: #0078a8; text-decoration: none; }

.stops { display: grid; grid-template-columns: 1fr 95px; align-items: center; gap: 16px 40px; padding: 33px 41px 0 9px; }
.stop { display: block; width: 100%; height: 137px; padding: 24px 44px 0 0; border-radius: 10px; background: #fff; color: #000; font-size: 39px; line-height: 46px; text-align: center; resize: none; overflow: hidden; }
.stop-icon { color: #0060b9; }
.fields { padding: 27px 0 0 36px; font-size: 34px; }
.heading { display: block; height: 58px; border-bottom: 2px solid #335a8e; font-size: 34px; line-height: 42px; letter-spacing: 2px; }
.item { padding-right: 18px; border-bottom: 2px solid #335a8e; }
.item input { display: block; width: 100%; padding: 0; border-bottom: 2px solid #7d97b9; outline: 0; }
.item input::placeholder { color: #7d97b9; opacity: 1; }
.detail { padding-bottom: 10px; }
.detail input { height: 41px; padding-bottom: 10px; }
.venue { display: grid; grid-template-columns: 1fr 406px; align-items: center; padding-top: 8px; padding-bottom: 10px; }
.venue label { padding-bottom: 4px; font-size: 30px; font-weight: 500; letter-spacing: 2px; white-space: nowrap; }
.venue input { height: 49px; padding-bottom: 6px; }
.submit { display: flex; align-items: center; padding: 68px 138px 0; }
.hand { position: relative; flex: none; margin-right: -27px; }
.send { flex: 1; height: 102px; border: 9px solid #6a86ad; border-radius: 34px; color: #6a86ad; font: 44px/52px "DejaVu Sans Mono", monospace; }
.home-bar { width: 330px; height: 11px; margin: auto auto 18px; border-radius: 6px; background: #4a4a4a; }
```
